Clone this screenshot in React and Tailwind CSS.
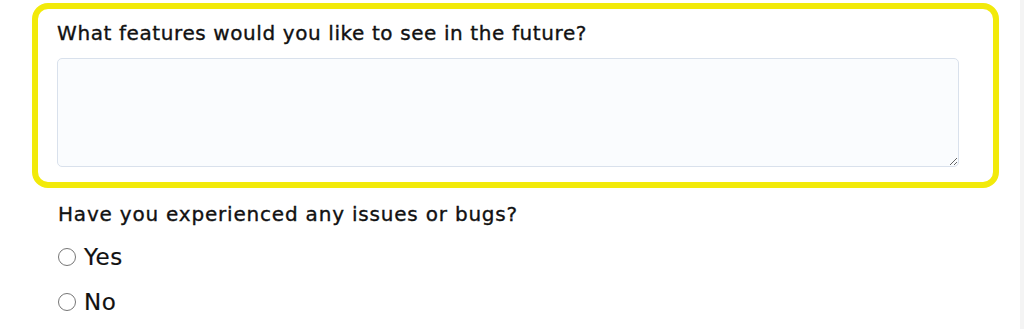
import React from 'react';

const Radio = ({ label }) => (
    <label className="flex items-center gap-[8px] h-[30px]">
        <span className="w-[18px] h-[18px] rounded-full border border-[#767676] bg-white"></span>
        <span className="text-[23px] text-[#111] tracking-[0.5px] [-webkit-text-stroke:0.2px_#111]">{label}</span>
    </label>
);

const App = () => {
    return (
        <div className="flex w-[1024px] h-[329px] bg-white overflow-hidden" style={{ fontFamily: '"DejaVu Sans", "Noto Sans", sans-serif' }}>
            <div className="flex-1 pl-[32px] pt-[3px]">
                <div className="w-[967px] h-[185px] border-[6px] border-[#f2ea0a] rounded-[16px] pl-[19px] pt-[10px]">
                    <h2 className="text-[20px] text-[#111] leading-[28px] tracking-[0.6px] [-webkit-text-stroke:0.35px_#111]">What features would you like to see in the future?</h2>
                    <textarea className="mt-[11px] w-[902px] h-[109px] bg-[#fafcfe] border border-[#d9e1ec] rounded-[5px] resize-y block"></textarea>
                </div>
                <div className="pl-[26px] pt-[12px]">
                    <h2 className="text-[20px] text-[#111] leading-[28px] tracking-[0.8px] [-webkit-text-stroke:0.35px_#111]">Have you experienced any issues or bugs?</h2>
                    <div className="mt-[14px] flex flex-col gap-[15px]">
                        <Radio label="Yes" />
                        <Radio label="No" />
                    </div>
                </div>
            </div>
            <div className="w-[4px] bg-[#f4f4f4]"></div>
        </div>
    );
};

export default App;
